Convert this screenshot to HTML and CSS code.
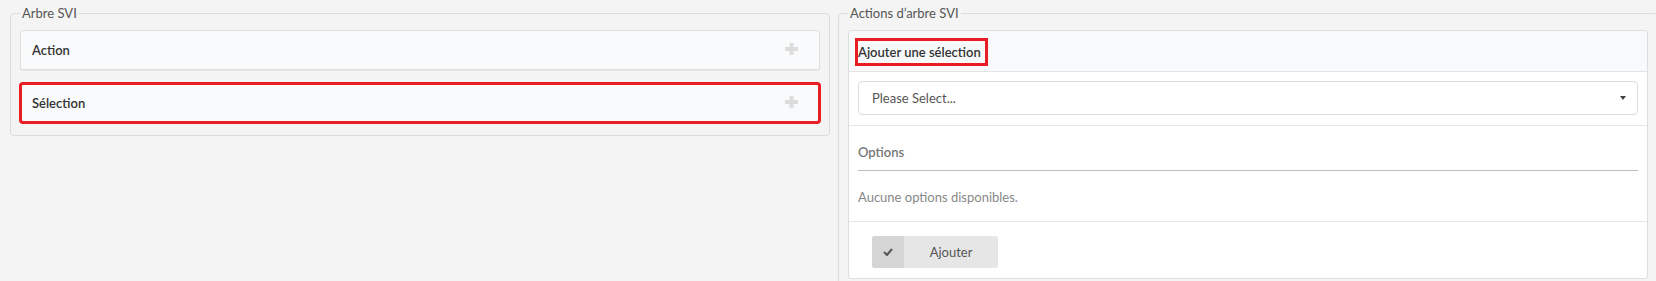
FILE: index.html
```html
<!DOCTYPE html>
<html lang="fr">

<head>
  <meta charset="UTF-8">
  <meta name="viewport" content="width=device-width, initial-scale=1.0">
  <title>Arbre SVI</title>
  <link rel="stylesheet" href="styles.css">
</head>

<body>
  <div class="page">
    <fieldset class="group">
      <legend>Arbre SVI</legend>
      <div class="tree">
        <div class="node">
          <span>Action</span>
          <svg class="add" width="13" height="12" viewBox="0 0 13 12"><path d="M4.5 0h4v4H13v4H8.5v4h-4V8H0V4h4.5z" /></svg>
        </div>
        <div class="node marked">
          <span>Sélection</span>
          <svg class="add" width="13" height="12" viewBox="0 0 13 12"><path d="M4.5 0h4v4H13v4H8.5v4h-4V8H0V4h4.5z" /></svg>
        </div>
      </div>
    </fieldset>

    <fieldset class="group">
      <legend>Actions d’arbre SVI</legend>
      <div class="card">
        <div class="card-head">
          <span class="title marked">Ajouter une sélection</span>
        </div>
        <div class="card-section">
          <div class="select">
            <span>Please Select...</span>
            <span class="caret"></span>
          </div>
        </div>
        <div class="card-section options">
          <div class="options-title">Options</div>
          <p class="empty">Aucune options disponibles.</p>
        </div>
        <div class="card-foot">
          <button class="btn">
            <span class="btn-icon">
              <svg width="10" height="8" viewBox="0 0 10 8"><path d="M1 4l3 3 5-6" /></svg>
            </span>
            <span class="btn-label">Ajouter</span>
          </button>
        </div>
      </div>
    </fieldset>
  </div>
</body>

</html>
```

FILE: styles.css
```css
* {
  box-sizing: border-box;
}

html, body {
  overflow: hidden;
}

body {
  margin: 0;
  font-family: Lato, 'Open Sans', sans-serif;
  font-size: 13px;
  color: #333;
  background-color: #f4f4f4;
}

.page {
  display: grid;
  grid-template-columns: 820px 820px;
  column-gap: 8px;
  align-items: start;
  padding: 4px 0 0 10px;
  width: 1660px;
}

.group {
  margin: 0;
  min-width: 0;
  padding: 8px 9px 12px;
  border: 1px solid #dcdcdc;
  border-radius: 4px;
}

.group legend {
  padding: 0 2px;
  line-height: 18px;
  color: #555;
}

.tree {
  display: flex;
  flex-direction: column;
  gap: 13px;
}

.node {
  display: flex;
  align-items: center;
  justify-content: space-between;
  height: 40px;
  padding: 0 21px 0 11px;
  background-color: #f9fafb;
  border: 1px solid #dedede;
  border-radius: 3px;
  box-shadow: 0 1px 0 #e4e4e4;
  font-weight: 600;
}

.add {
  fill: #dcdcdc;
  margin-top: -3px;
}

.marked {
  outline: 3px solid #ea1c24;
  outline-offset: -2px;
}

.card {
  background-color: #fff;
  border: 1px solid #dedede;
  border-radius: 3px;
}

.card-head {
  display: flex;
  align-items: center;
  height: 41px;
  padding: 0 9px;
  background-color: #f8f9fa;
  border-bottom: 1px solid #e3e3e3;
  border-radius: 3px 3px 0 0;
}

.card-head .title {
  display: inline-block;
  line-height: 22px;
  padding: 0 4px 0 0;
  font-weight: 600;
  outline-offset: 0;
  margin-top: 1px;
}

.card-section {
  padding: 9px 9px 10px;
  border-bottom: 1px solid #e6e6e6;
}

.select {
  display: flex;
  align-items: center;
  justify-content: space-between;
  height: 34px;
  padding: 0 11px 0 13px;
  border: 1px solid #dcdcdc;
  border-radius: 4px;
  color: #555;
}

.caret {
  border-left: 3.5px solid transparent;
  border-right: 3.5px solid transparent;
  border-top: 4px solid #444;
  margin-top: -1px;
}

.options {
  padding-bottom: 14px;
}

.options-title {
  padding: 7px 0 8px;
  line-height: 20px;
  font-weight: 600;
  color: #777;
  border-bottom: 1px solid #bdbdbd;
}

.empty {
  margin: 16px 0 0;
  line-height: 20px;
  color: #888;
}

.card-foot {
  padding: 14px 23px 10px;
}

.btn {
  display: flex;
  width: 126px;
  height: 32px;
  padding: 0;
  border: none;
  border-radius: 3px;
  overflow: hidden;
  background-color: #e6e6e6;
  font-family: inherit;
  font-size: 13px;
  color: #555;
}

.btn-icon {
  display: flex;
  align-items: center;
  justify-content: center;
  width: 32px;
  height: 100%;
  background-color: #d5d5d5;
}

.btn-icon path {
  fill: none;
  stroke: #555;
  stroke-width: 2;
}

.btn-label {
  flex: 1;
  align-self: center;
  text-align: center;
}
```
